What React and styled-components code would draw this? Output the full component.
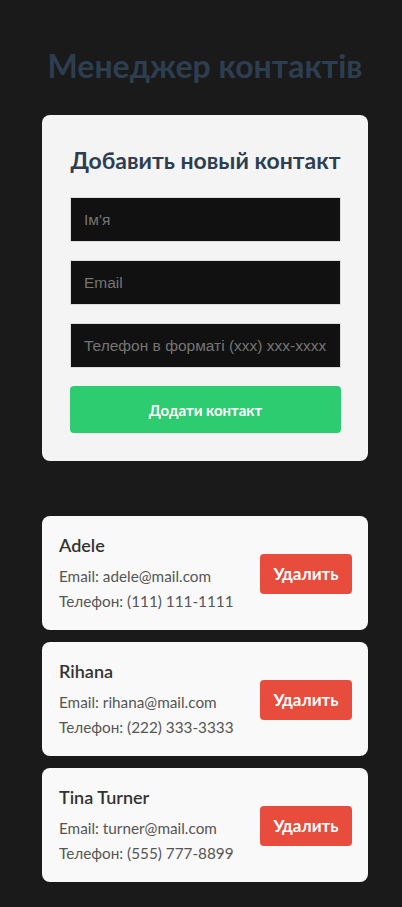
import React from "react";
import styled, { createGlobalStyle } from "styled-components";

const GlobalStyle = createGlobalStyle`
  html, body {
    margin: 0;
    background: #1a1a1a;
    font-family: Lato, "Noto Sans", sans-serif;
  }
`;

const contacts = [
  { name: "Adele", email: "adele@mail.com", phone: "(111) 111-1111" },
  { name: "Rihana", email: "rihana@mail.com", phone: "(222) 333-3333" },
  { name: "Tina Turner", email: "turner@mail.com", phone: "(555) 777-8899" },
];

const App = () => {
  return (
    <>
      <GlobalStyle />
      <Page>
        <Title>Менеджер контактів</Title>
        <FormCard>
          <FormTitle>Добавить новый контакт</FormTitle>
          <Input placeholder="Ім'я" />
          <Input placeholder="Email" />
          <Input placeholder="Телефон в форматі (xxx) xxx-xxxx" />
          <AddButton>Додати контакт</AddButton>
        </FormCard>
        <List>
          {contacts.map((c, i) => (
            <Contact key={i}>
              <Info>
                <Name>{c.name}</Name>
                <Line>Email: {c.email}</Line>
                <Line>Телефон: {c.phone}</Line>
              </Info>
              <DeleteButton>Удалить</DeleteButton>
            </Contact>
          ))}
        </List>
      </Page>
    </>
  );
};

const Page = styled.div`
  padding: 44px 34px 24px 42px;
  display: flex;
  flex-direction: column;
`;

const Title = styled.h1`
  margin: 0 0 27px;
  text-align: center;
  white-space: nowrap;
  color: #2c3e50;
  font-size: 32px;
  font-weight: 700;
  line-height: 44px;
`;

const FormCard = styled.div`
  background: #f4f4f4;
  border-radius: 8px;
  padding: 30px 27px 28px 28px;
  display: flex;
  flex-direction: column;
`;

const FormTitle = styled.h2`
  margin: 0 0 22px;
  text-align: center;
  white-space: nowrap;
  color: #2c3e50;
  font-size: 23px;
  font-weight: 700;
  line-height: 30px;
`;

const Input = styled.input`
  box-sizing: border-box;
  height: 45px;
  margin-bottom: 18px;
  padding: 0 13px;
  background: #111;
  border: 1px solid #ddd;
  color: #eee;
  font-family: "Liberation Sans", Arial, sans-serif;
  font-size: 15.5px;
  outline: none;

  &::placeholder {
    color: #757575;
  }
`;

const AddButton = styled.button`
  height: 47px;
  border: none;
  border-radius: 4px;
  background: #2ecc71;
  color: #fff;
  font-family: Lato, sans-serif;
  font-size: 15px;
  font-weight: 700;
  cursor: pointer;
`;

const List = styled.div`
  margin-top: 55px;
  display: flex;
  flex-direction: column;
  gap: 12px;
`;

const Contact = styled.div`
  background: #f9f9f9;
  border-radius: 8px;
  padding: 17px 16px 16px 17px;
  display: flex;
  align-items: center;
  justify-content: space-between;
`;

const Info = styled.div`
  display: flex;
  flex-direction: column;
`;

const Name = styled.div`
  color: #333;
  font-size: 18px;
  font-weight: 600;
  line-height: 24px;
  margin-bottom: 7px;
`;

const Line = styled.div`
  color: #555;
  font-size: 15.3px;
  line-height: 25px;
`;

const DeleteButton = styled.button`
  width: 92px;
  height: 40px;
  border: none;
  border-radius: 4px;
  background: #e74c3c;
  color: #fff;
  font-family: Lato, sans-serif;
  font-size: 17px;
  font-weight: 700;
  cursor: pointer;
`;

export default App;
